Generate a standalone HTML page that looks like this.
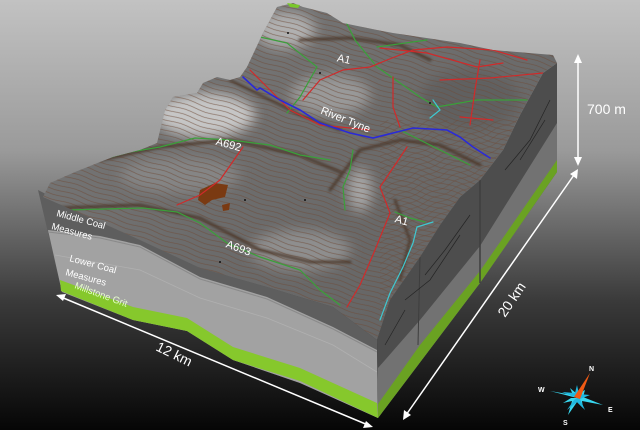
<!DOCTYPE html>
<html><head><meta charset="utf-8"><style>
html,body{margin:0;padding:0;background:#000;}
svg{display:block;}
text{font-family:"Liberation Sans",Arial,sans-serif;}
</style></head><body>
<svg width="640" height="430" viewBox="0 0 640 430" xmlns="http://www.w3.org/2000/svg">
<defs>
<linearGradient id="bg" x1="0" y1="0" x2="0" y2="1">
<stop offset="0" stop-color="#c2c2c2"/><stop offset="0.35" stop-color="#9a9a9a"/>
<stop offset="0.7" stop-color="#3a3a3a"/><stop offset="1" stop-color="#060606"/>
</linearGradient>
<linearGradient id="terr" x1="0" y1="0" x2="1" y2="1">
<stop offset="0" stop-color="#7c7c7c"/><stop offset="0.5" stop-color="#6c6c6c"/><stop offset="1" stop-color="#626262"/>
</linearGradient>
<pattern id="cont" patternUnits="userSpaceOnUse" width="40" height="5" patternTransform="rotate(18)">
<path d="M0 2.5 Q10 0.8 20 2.5 T40 2.5" fill="none" stroke="#6e4b38" stroke-width="0.7"/>
</pattern>
<pattern id="cont2" patternUnits="userSpaceOnUse" width="30" height="6" patternTransform="rotate(-25)">
<path d="M0 3 Q7.5 1 15 3 T30 3" fill="none" stroke="#6e4b38" stroke-width="0.7"/>
</pattern>
<filter id="bl" x="-50%" y="-50%" width="200%" height="200%"><feGaussianBlur stdDeviation="6"/></filter>
<filter id="bl2"><feGaussianBlur stdDeviation="1.2"/></filter>
<clipPath id="tc"><path id="tp" d="M43,197 L50,183 L75,172 L100,162 L113,157 L140,150 L157,143 L165,110 L173,97 L197,93 L203,83 L217,77 L230,80 L240,77 L247,67 L263,33 L277,7 L293,3 L303,7 L327,13 L343,23 L377,30 L393,33 L460,43 L493,50 L553,55 L557,63 L543,73 L520,115 L503,150 L480,180 L460,197 L440,225 L420,257 L390,300 L377,340 L333,307 L267,287 L200,268 L140,240 L100,222 Z"/></clipPath>
</defs>
<rect width="640" height="430" fill="url(#bg)"/>

<!-- front face -->
<path d="M38,190 L100,222 L140,240 L200,268 L267,287 L333,307 L377,340 L378,418 L300,383 L233,360 L187,331 L133,320 L62,292 Z" fill="#5e5e5e"/>
<path d="M48,230 L100,236 L140,245 L200,277 L267,297 L333,327 L377,350 L378,418 L300,383 L233,360 L187,331 L133,320 L62,292 Z" fill="#a2a2a2"/>
<path d="M48,232 L100,238 L140,247 L200,279 L267,299 L333,329 L377,352" fill="none" stroke="#8a8a8a" stroke-width="1"/>
<path d="M55,255 L140,270 L200,298 L267,318 L333,345 L377,372" fill="none" stroke="#b0b0b0" stroke-width="0.8"/>
<path d="M60,280 L133,307 L187,318 L233,347 L300,368 L377,403 L378,418 L300,381 L233,360 L187,331 L133,320 L61,291 Z" fill="#86c82c"/>
<!-- right face -->
<path d="M377,340 L390,300 L420,257 L440,225 L460,197 L480,180 L503,150 L520,115 L543,73 L557,63 L557,172 L480,283 L378,418 Z" fill="#4d4d4d"/>
<path d="M557,123 L557,172 L480,283 L378,418 L378,368 L420,320 L480,246 Z" fill="#727272"/>
<path d="M557,160 L557,172 L480,283 L378,418 L378,404 L420,345 L480,271 Z" fill="#6aa222"/>
<path d="M480,180 L480,283" stroke="#3e3e3e" stroke-width="1.5"/>
<path d="M420,257 L418,345" stroke="#3e3e3e" stroke-width="1"/>
<g fill="none" stroke="#1a1a1a" stroke-width="0.7" opacity="0.8">
<path d="M550,100 L530,140 L505,170"/><path d="M545,120 L520,160"/>
<path d="M470,215 L445,250 L425,275"/><path d="M460,235 L430,280 L405,300"/>
<path d="M405,310 L385,345"/>
</g>

<!-- terrain -->
<use href="#tp" fill="url(#terr)"/>
<g clip-path="url(#tc)">
<ellipse cx="205" cy="115" rx="50" ry="22" fill="#d0d0d0" filter="url(#bl)" opacity="0.9"/>
<ellipse cx="285" cy="30" rx="30" ry="18" fill="#b0b0b0" filter="url(#bl)"/>
<ellipse cx="330" cy="95" rx="40" ry="20" fill="#999" filter="url(#bl)"/>
<ellipse cx="360" cy="190" rx="12" ry="22" fill="#a5a5a5" filter="url(#bl)"/>
<ellipse cx="180" cy="175" rx="60" ry="18" fill="#858585" filter="url(#bl)"/>
<ellipse cx="470" cy="100" rx="50" ry="30" fill="#606060" filter="url(#bl)"/>
<ellipse cx="300" cy="250" rx="50" ry="20" fill="#8e8e8e" filter="url(#bl)"/>
<rect x="0" y="0" width="640" height="430" fill="url(#cont)" opacity="0.65"/>
<rect x="380" y="120" width="200" height="200" fill="url(#cont2)" opacity="0.5"/>
<g fill="none" stroke="#4a3428" stroke-linecap="round" opacity="0.85" filter="url(#bl2)">
<path d="M100,160 L160,147 L230,140 L300,155 L340,172" stroke-width="3"/>
<path d="M60,208 L140,205 L200,218 L260,250 L310,262 L350,262" stroke-width="3"/>
<path d="M300,40 L350,38 L400,45 L430,60" stroke-width="3"/>
<path d="M330,190 L360,150 L400,140 L440,145 L480,165" stroke-width="3"/>
<path d="M230,80 L260,95 L300,115 L340,130" stroke-width="2.5"/>
<path d="M395,200 L410,240 L400,280" stroke-width="2.5"/>
</g>
<path d="M200,190 L215,183 L228,185 L225,197 L212,200 L205,205 L198,200 Z" fill="#7a3a12"/>
<path d="M222,205 L230,203 L229,210 L223,211Z" fill="#7a3a12"/>
<g fill="none" stroke-width="1.2" stroke-linecap="round">
<path d="M100,160 L130,152 L160,147 L195,138 L230,140 L270,145 L300,155 L330,160" stroke="#3aa03a"/>
<path d="M67,210 L143,208 L177,212 L200,223 L227,243 L260,257 L300,270 L320,290 L340,305" stroke="#3aa03a"/>
<path d="M260,37 L287,43 L317,67 L300,97 L287,113" stroke="#3aa03a"/>
<path d="M377,47 L427,40" stroke="#3aa03a"/>
<path d="M345,20 L355,40 L377,67 L420,97 L437,107 L477,100 L527,100" stroke="#3aa03a"/>
<path d="M353,150 L350,170 L343,187 L345,210" stroke="#3aa03a"/>
<path d="M400,130 L440,150 L470,165" stroke="#3aa03a"/>
<path d="M395,212 L410,218 L425,222" stroke="#3aa03a"/>
<path d="M220,180 L200,195 L177,205" stroke="#d02a2a"/>
<path d="M243,147 L220,180" stroke="#d02a2a"/>
<path d="M390,213 L375,250 L360,285 L347,307" stroke="#d02a2a"/>
<path d="M407,147 L395,165 L380,187 L390,213" stroke="#d02a2a"/>
<path d="M303,100 L320,80 L343,70 L370,67 L387,60 L413,50 L447,47 L493,50 L527,60" stroke="#d02a2a"/>
<path d="M380,48 L427,53 L477,67 L503,63" stroke="#d02a2a"/>
<path d="M393,77 L393,107 L400,127" stroke="#d02a2a"/>
<path d="M440,80 L490,78 L543,73" stroke="#d02a2a"/>
<path d="M460,117 L493,120" stroke="#d02a2a"/>
<path d="M250,70 L270,90 L290,110 L320,125 L370,130" stroke="#d02a2a"/>
<path d="M480,60 L475,90 L470,125" stroke="#d02a2a"/>
<path d="M433,222 L417,227 L413,243 L403,267 L390,293 L380,320" stroke="#3fc8d0"/>
<path d="M433,100 L440,110 L430,118" stroke="#3fc8d0"/>
<path d="M243,77 L257,90 L260,88 L280,100 L300,110 L320,123 L350,133 L373,138 L393,133 L413,128 L447,130 L460,137 L473,147 L490,158" stroke="#2a2ad8" stroke-width="1.6"/>
</g>
<g fill="#111"><circle cx="288" cy="33" r="1"/><circle cx="320" cy="73" r="1"/><circle cx="305" cy="200" r="1"/><circle cx="430" cy="103" r="1"/><circle cx="245" cy="200" r="1"/><circle cx="220" cy="262" r="1"/></g>
</g>
<path d="M287,3 L300,5 L298,8 L290,7Z" fill="#7ac82a"/>

<g fill="#fff" font-size="11">
<text x="337" y="63" transform="rotate(12 345 60)">A1</text>
<text x="320" y="121" transform="rotate(22 340 117)">River Tyne</text>
<text x="216" y="147" transform="rotate(15 225 143)">A692</text>
<text x="226" y="251" transform="rotate(20 237 247)">A693</text>
<text x="395" y="224" transform="rotate(15 402 220)">A1</text>
<text font-size="9.5" x="56" y="216" transform="rotate(15 56 216)">Middle Coal</text>
<text font-size="9.5" x="51" y="229" transform="rotate(15 51 229)">Measures</text>
<text font-size="9.5" x="69" y="261" transform="rotate(15 69 261)">Lower Coal</text>
<text font-size="9.5" x="65" y="275" transform="rotate(15 65 275)">Measures</text>
<text font-size="9.5" x="74" y="288" transform="rotate(20 74 288)" fill="#e8ffd0">Millstone Grit</text>
<text font-size="14" x="587" y="114">700 m</text>
<text font-size="14" x="0" y="0" transform="translate(155,350) rotate(26)">12 km</text>
<text font-size="14" x="0" y="0" transform="translate(505,318) rotate(-56)">20 km</text>
</g>
<g stroke="#fff" stroke-width="1.5" fill="#fff">
<line x1="578" y1="60" x2="578" y2="160"/>
<path d="M578,54 L574,63 L582,63Z" stroke="none"/><path d="M578,166 L574,157 L582,157Z" stroke="none"/>
<line x1="61" y1="297" x2="368" y2="425"/>
<path d="M56,295 L66,294 L63,301Z" stroke="none"/><path d="M373,427 L363,428 L366,421Z" stroke="none"/>
<line x1="574" y1="175" x2="406" y2="415"/>
<path d="M578,169 L570,174 L577,179Z" stroke="none"/><path d="M403,420 L404,410 L411,415Z" stroke="none"/>
</g>
<g>
<path d="M577,398 L550,391 L573,395 L570,388 L577,394 L585,390 L583,397 L603,405 L582,401 L583,408 L577,402 L568,415 L572,401 L563,403 L571,398 Z" fill="#38d8f0"/>
<path d="M577,398 L562,392 L575,393 L577,385 L579,394 L590,395 L580,399 L585,410 L577,402 L567,410 L574,400 Z" fill="#20b8e0"/>
<path d="M574,397 L590,373 L580,399 Z" fill="#f05a14"/>
<g fill="#fff" font-size="7" font-weight="bold"><text x="589" y="371">N</text><text x="538" y="392">W</text><text x="608" y="412">E</text><text x="563" y="425">S</text></g>
</g>
</svg>
</body></html>
